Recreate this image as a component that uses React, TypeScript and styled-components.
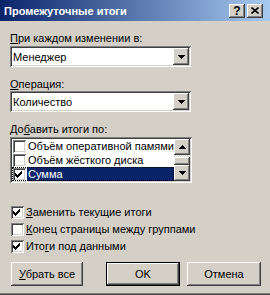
import React from 'react';
import styled, { createGlobalStyle } from 'styled-components';

const Global = createGlobalStyle`
  html, body { margin: 0; padding: 0; background: #D4D0C8; }
  body { font-family: "Liberation Sans", Arial, sans-serif; font-size: 11px; color: #000; }
  * { box-sizing: border-box; }
`;

const FACE = '#D4D0C8';
const raised = `box-shadow: inset -1px -1px #404040, inset 1px 1px #FFFFFF, inset -2px -2px #808080, inset 2px 2px ${FACE};`;
const sunken = `box-shadow: inset 1px 1px #808080, inset -1px -1px #FFFFFF, inset 2px 2px #404040, inset -2px -2px ${FACE};`;

const Window = styled.div`
  width: 270px;
  height: 295px;
  background: ${FACE};
  display: flex;
  flex-direction: column;
  box-shadow: inset 0 -1px 0 #404040, inset 0 -2px 0 #808080;
`;

const TitleBar = styled.div`
  height: 21px;
  flex: none;
  background: linear-gradient(to right, #0A246A, #A6CAF0);
  display: flex;
  align-items: center;
  justify-content: space-between;
  padding: 0 7px 0 4px;
`;

const Title = styled.span`
  color: #fff;
  font-weight: bold;
  font-size: 11px;
`;

const CapButtons = styled.div`
  display: flex;
  gap: 2px;
`;

const CapButton = styled.div`
  width: 16px;
  height: 14px;
  background: ${FACE};
  ${raised}
  display: flex;
  align-items: center;
  justify-content: center;
  font-weight: bold;
  font-size: 12px;
  line-height: 14px;
`;

const Content = styled.div`
  display: flex;
  flex-direction: column;
  padding: 10px 0 0 10px;
`;

const Label = styled.div<{ $mt?: number }>`
  height: 14px;
  line-height: 14px;
  margin-top: ${(p) => p.$mt ?? 0}px;
  white-space: nowrap;
`;

const U = styled.span`
  text-decoration: underline;
`;

const Combo = styled.div<{ $mt?: number }>`
  width: 181px;
  height: 21px;
  margin-top: ${(p) => p.$mt ?? 0}px;
  background: #fff;
  ${sunken}
  display: flex;
  align-items: center;
  padding: 2px 2px 2px 3px;
`;

const ComboText = styled.span`
  flex: 1;
  line-height: 14px;
`;

const DropButton = styled.div`
  width: 16px;
  height: 17px;
  background: ${FACE};
  ${raised}
  display: flex;
  align-items: center;
  justify-content: center;
`;

const ListBox = styled.div`
  width: 182px;
  height: 46px;
  margin-top: 1px;
  background: #fff;
  ${sunken}
  padding: 2px;
  display: flex;
`;

const Rows = styled.div`
  flex: 1;
  display: flex;
  flex-direction: column;
  overflow: hidden;
`;

const ListRow = styled.div<{ $selected?: boolean }>`
  height: 14px;
  display: flex;
  align-items: center;
  padding-left: 1px;
  white-space: nowrap;
  ${(p) => (p.$selected ? 'outline: 1px dotted #000; outline-offset: -1px;' : '')}
`;

const ListText = styled.span<{ $selected?: boolean }>`
  flex: 1;
  height: 14px;
  line-height: 14px;
  margin-left: 1px;
  padding-left: 1px;
  overflow: hidden;
  background: ${(p) => (p.$selected ? '#0A246A' : 'transparent')};
  color: ${(p) => (p.$selected ? '#fff' : '#000')};
`;

const ScrollBar = styled.div`
  width: 16px;
  display: flex;
  flex-direction: column;
`;

const ScrollButton = styled.div`
  width: 16px;
  height: 16px;
  background: ${FACE};
  ${raised}
  display: flex;
  align-items: center;
  justify-content: center;
`;

const Track = styled.div`
  flex: 1;
  display: flex;
  flex-direction: column;
  justify-content: flex-end;
  background-color: #fff;
  background-image: linear-gradient(45deg, ${FACE} 25%, transparent 25%, transparent 75%, ${FACE} 75%),
    linear-gradient(45deg, ${FACE} 25%, transparent 25%, transparent 75%, ${FACE} 75%);
  background-size: 2px 2px;
  background-position: 0 0, 1px 1px;
`;

const Thumb = styled.div`
  height: 8px;
  background: ${FACE};
  ${raised}
`;

const Box = styled.div`
  width: 13px;
  height: 13px;
  flex: none;
  background: #fff;
  ${sunken}
  display: flex;
  align-items: center;
  justify-content: center;
`;

const Options = styled.div`
  display: flex;
  flex-direction: column;
  margin-top: 21px;
  padding-left: 1px;
`;

const OptionRow = styled.div`
  height: 17px;
  line-height: 17px;
  display: flex;
  align-items: center;
  gap: 2px;
  white-space: nowrap;
`;

const Buttons = styled.div`
  display: flex;
  margin-top: 7px;
  padding-left: 1px;
`;

const Button = styled.div<{ $default?: boolean; $w: number; $ml?: number }>`
  width: ${(p) => p.$w}px;
  height: 24px;
  margin-left: ${(p) => p.$ml ?? 0}px;
  background: ${FACE};
  display: flex;
  align-items: center;
  justify-content: center;
  ${(p) =>
    p.$default
      ? `box-shadow: inset 0 0 0 1px #000, inset -2px -2px #404040, inset 2px 2px #FFFFFF, inset -3px -3px #808080, inset 3px 3px ${FACE};`
      : raised}
`;

const Check = () => (
  <svg width="9" height="9" viewBox="0 0 9 9" shapeRendering="crispEdges">
    <polygon points="0,3 2,5 7,0 7,3 2,8 0,6" fill="#000" />
  </svg>
);

const Arrow = ({ up }: { up?: boolean }) => (
  <svg width="7" height="4" viewBox="0 0 7 4" shapeRendering="crispEdges">
    {up ? <polygon points="3.5,0 7,4 0,4" fill="#000" /> : <polygon points="0,0 7,0 3.5,4" fill="#000" />}
  </svg>
);

const CloseGlyph = () => (
  <svg width="8" height="7" viewBox="0 0 8 7">
    <path d="M0.5 0.5 L7.5 6.5 M7.5 0.5 L0.5 6.5" stroke="#000" strokeWidth="1.6" />
  </svg>
);

const listItems = [
  { text: 'Объём оперативной памями', checked: false },
  { text: 'Объём жёсткого диска', checked: false },
  { text: 'Сумма', checked: true, selected: true },
];

export default function App() {
  return (
    <>
      <Global />
      <Window>
        <TitleBar>
          <Title>Промежуточные итоги</Title>
          <CapButtons>
            <CapButton>?</CapButton>
            <CapButton>
              <CloseGlyph />
            </CapButton>
          </CapButtons>
        </TitleBar>
        <Content>
          <Label>
            <U>П</U>ри каждом изменении в:
          </Label>
          <Combo $mt={1}>
            <ComboText>Менеджер</ComboText>
            <DropButton>
              <Arrow />
            </DropButton>
          </Combo>
          <Label $mt={10}>
            <U>О</U>перация:
          </Label>
          <Combo>
            <ComboText>Количество</ComboText>
            <DropButton>
              <Arrow />
            </DropButton>
          </Combo>
          <Label $mt={10}>
            До<U>б</U>авить итоги по:
          </Label>
          <ListBox>
            <Rows>
              {listItems.map((it) => (
                <ListRow key={it.text} $selected={it.selected}>
                  <Box>{it.checked && <Check />}</Box>
                  <ListText $selected={it.selected}>{it.text}</ListText>
                </ListRow>
              ))}
            </Rows>
            <ScrollBar>
              <ScrollButton>
                <Arrow up />
              </ScrollButton>
              <Track>
                <Thumb />
              </Track>
              <ScrollButton>
                <Arrow />
              </ScrollButton>
            </ScrollBar>
          </ListBox>
          <Options>
            <OptionRow>
              <Box>
                <Check />
              </Box>
              <span>
                <U>З</U>аменить текущие итоги
              </span>
            </OptionRow>
            <OptionRow>
              <Box />
              <span>
                <U>К</U>онец страницы между группами
              </span>
            </OptionRow>
            <OptionRow>
              <Box>
                <Check />
              </Box>
              <span>
                Ито<U>г</U>и под данными
              </span>
            </OptionRow>
          </Options>
          <Buttons>
            <Button $w={72}>
              <span>
                <U>У</U>брать все
              </span>
            </Button>
            <Button $w={74} $ml={23} $default>
              OK
            </Button>
            <Button $w={74} $ml={7}>
              Отмена
            </Button>
          </Buttons>
        </Content>
      </Window>
    </>
  );
}
